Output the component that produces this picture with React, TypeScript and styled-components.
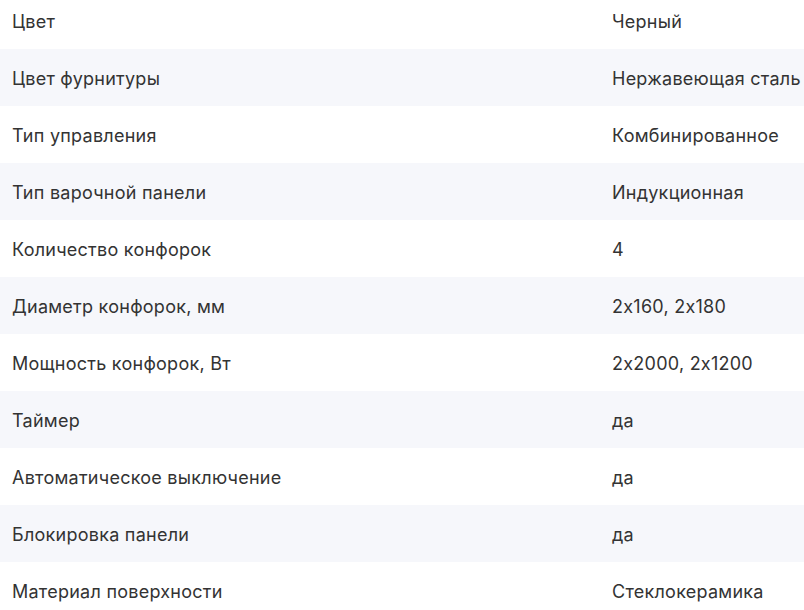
import React from "react";
import styled, { createGlobalStyle } from "styled-components";

const Global = createGlobalStyle`
  html, body { margin: 0; padding: 0; background: #ffffff; }
  body { font-family: Inter, "Noto Sans", sans-serif; overflow: hidden; }
`;

const Table = styled.div`
  display: flex;
  flex-direction: column;
  margin-top: -8px;
  width: 804px;
`;

const Row = styled.div<{ $alt: boolean }>`
  display: grid;
  grid-template-columns: 600px 1fr;
  align-items: center;
  height: 57px;
  padding: 0 0 0 12px;
  background: ${(p) => (p.$alt ? "#f6f7fb" : "#ffffff")};
`;

const Label = styled.span`
  font-size: 18px;
  line-height: 27px;
  padding-top: 1px;
  letter-spacing: 0.25px;
  color: #333333;
  white-space: nowrap;
`;

const Value = styled(Label)``;

const specs: [string, string][] = [
  ["Цвет", "Черный"],
  ["Цвет фурнитуры", "Нержавеющая сталь"],
  ["Тип управления", "Комбинированное"],
  ["Тип варочной панели", "Индукционная"],
  ["Количество конфорок", "4"],
  ["Диаметр конфорок, мм", "2х160, 2х180"],
  ["Мощность конфорок, Вт", "2х2000, 2х1200"],
  ["Таймер", "да"],
  ["Автоматическое выключение", "да"],
  ["Блокировка панели", "да"],
  ["Материал поверхности", "Стеклокерамика"],
];

export default function App() {
  return (
    <>
      <Global />
      <Table>
        {specs.map(([k, v], i) => (
          <Row key={k} $alt={i % 2 === 1}>
            <Label>{k}</Label>
            <Value>{v}</Value>
          </Row>
        ))}
      </Table>
    </>
  );
}
